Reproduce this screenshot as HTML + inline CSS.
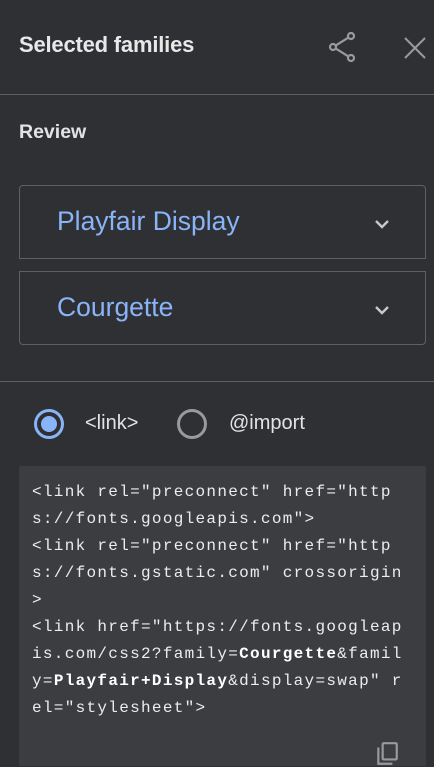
<!DOCTYPE html>
<html><head><style>
*{margin:0;padding:0;box-sizing:border-box}
body{width:434px;height:753px;overflow:hidden;background:#2f3034;font-family:"Liberation Sans",sans-serif;color:#e3e3e3;position:relative}
.abs{position:absolute}
.title{left:19px;top:32px;font-size:22px;font-weight:bold;color:#e8e8e8;letter-spacing:-0.2px}
.hr{left:0;width:434px;height:1px;background:#5f6064}
.review{left:19px;top:121px;font-size:19.5px;font-weight:bold;color:#e3e3e3}
.box{left:19px;width:407px;height:74px;border:1px solid #5f6064}
.box span{position:absolute;left:37px;top:20px;font-size:26.5px;color:#8ab4f8}
.box svg{position:absolute;right:35px;top:33px}
.code{left:19px;top:466px;width:407px;height:300px;background:#3c3d41;border-radius:2px}
pre{position:absolute;left:13px;top:13px;font-family:"Liberation Mono",monospace;font-size:16px;letter-spacing:1.3px;line-height:27px;color:#ececec}
pre b{color:#fff}
.rl{font-size:20px;color:#e3e3e3}
</style></head><body>
<div class="abs title">Selected families</div>
<svg class="abs" style="left:328px;top:31px" width="30" height="32" viewBox="0 0 30 32" fill="none" stroke="#9a9a9e" stroke-width="2.2"><circle cx="23" cy="5" r="3"/><circle cx="5" cy="16" r="3"/><circle cx="23" cy="27" r="3"/><path d="M8 14.3 L20 6.8 M8 17.7 L20 25.2"/></svg>
<svg class="abs" style="left:404px;top:37px" width="22" height="22" viewBox="0 0 22 22" stroke="#9a9a9e" stroke-width="2"><path d="M1 1L21 21M21 1L1 21"/></svg>
<div class="abs hr" style="top:94px"></div>
<div class="abs review">Review</div>
<div class="abs box" style="top:185px;border-radius:4px 4px 0 0"><span>Playfair Display</span><svg width="16" height="10" viewBox="0 0 16 10" fill="none" stroke="#c8c8c8" stroke-width="2.4"><path d="M2 2L8 8L14 2"/></svg></div>
<div class="abs box" style="top:271px;border-radius:0 0 4px 4px"><span>Courgette</span><svg width="16" height="10" viewBox="0 0 16 10" fill="none" stroke="#c8c8c8" stroke-width="2.4"><path d="M2 2L8 8L14 2"/></svg></div>
<div class="abs hr" style="top:381px"></div>
<svg class="abs" style="left:33px;top:408px" width="32" height="32" viewBox="0 0 32 32"><circle cx="16" cy="16" r="13.5" fill="none" stroke="#8ab4f8" stroke-width="3"/><circle cx="16" cy="16" r="8" fill="#8ab4f8"/></svg>
<div class="abs rl" style="left:85px;top:412px">&lt;link&gt;</div>
<svg class="abs" style="left:176px;top:408px" width="32" height="32" viewBox="0 0 32 32"><circle cx="16" cy="16" r="13.5" fill="none" stroke="#9a9a9e" stroke-width="3"/></svg>
<div class="abs rl" style="left:229px;top:412px">@import</div>
<div class="abs code"><pre>&lt;link rel="preconnect" href="http
s://fonts.googleapis.com"&gt;
&lt;link rel="preconnect" href="http
s://fonts.gstatic.com" crossorigin
&gt;
&lt;link href="https://fonts.googleap
is.com/css2?family=<b>Courgette</b>&amp;famil
y=<b>Playfair+Display</b>&amp;display=swap" r
el="stylesheet"&gt;</pre>
<svg class="abs" style="left:355px;top:275px" width="26" height="26" viewBox="0 0 24 24" fill="none" stroke="#9a9a9e" stroke-width="2"><rect x="8" y="2" width="13" height="15" rx="1"/><path d="M4 6v15h13"/></svg>
</div>
</body></html>
